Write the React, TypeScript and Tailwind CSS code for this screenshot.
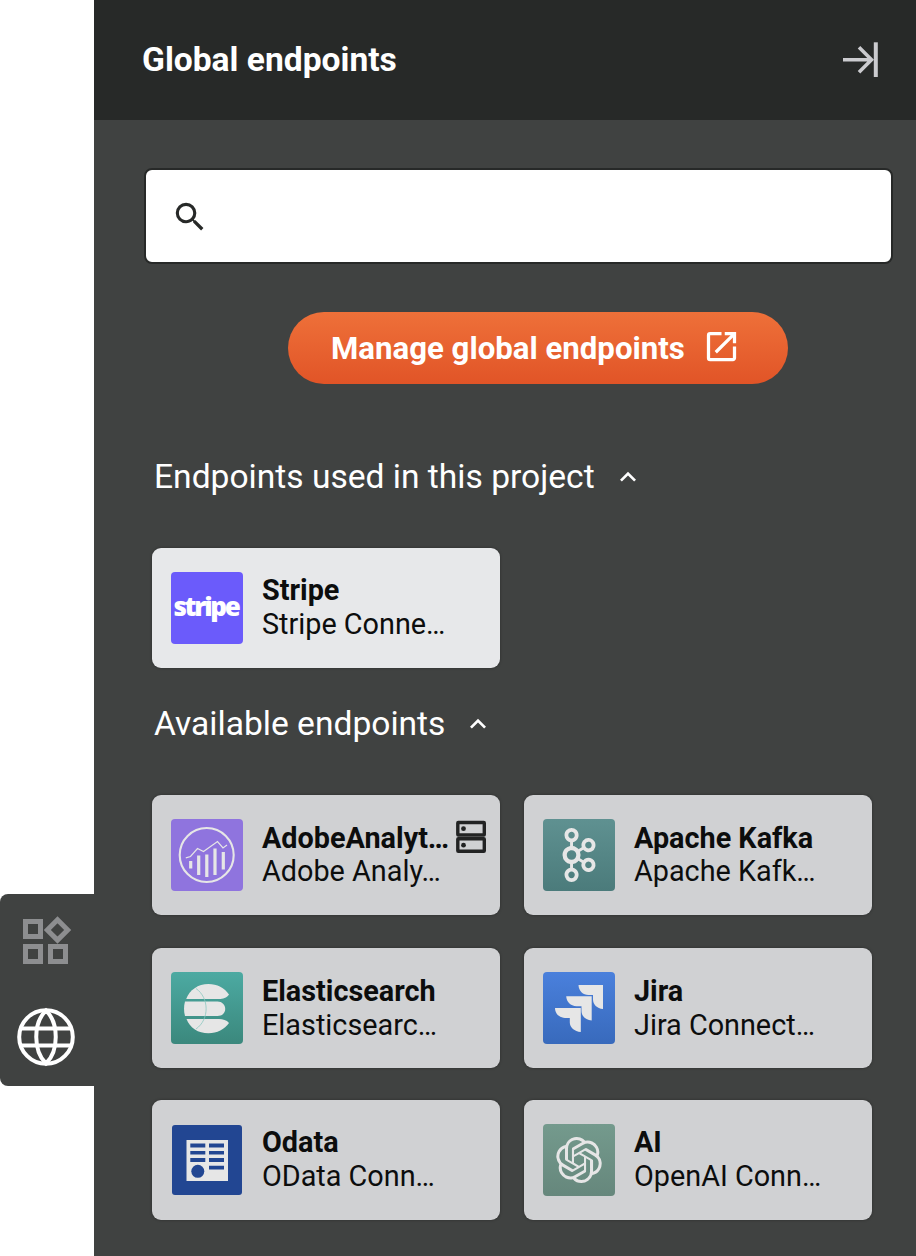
import React from "react";
import { MdKeyboardArrowUp, MdOpenInNew, MdSearch } from "react-icons/md";
import { SiApachekafka, SiOpenai } from "react-icons/si";

interface EndpointCardProps {
    name: string;
    description: string;
    logo: React.ReactNode;
    used?: boolean;
    onServer?: boolean;
    textClassName?: string;
}

const StripeLogo = () => (
    <div className="flex h-[72px] w-[72px] items-center justify-center rounded bg-[#6b5bfb] pr-[2px] pb-[4px]">
        <span className="font-['Open_Sans',sans-serif] text-[26px] leading-none font-extrabold tracking-[-2.3px] text-white">
            stripe
        </span>
    </div>
);

const AdobeLogo = () => (
    <div className="h-[72px] w-[72px] rounded bg-[#8f74de]">
        <svg viewBox="0 0 72 72" fill="none" stroke="#e6e6e6">
            <circle cx="35.7" cy="36" r="27" strokeWidth="2.1" />
            <path d="M14.8 38.8L19.5 37.5L26.5 29.5L32.5 32.5L46.5 22.5L52 29L56 26" strokeWidth="1.2" />
            <path d="M19.7 42V49.5M27.7 36.5V56M35.8 35.5V58M44 29.5V56M52.3 33V50.5" strokeWidth="3.2" />
        </svg>
    </div>
);

const KafkaLogo = () => (
    <div className="flex h-[72px] w-[72px] items-center justify-center rounded bg-gradient-to-b from-[#5f9191] to-[#4b7b7b]">
        <SiApachekafka className="h-[54px] w-[54px] text-[#e6e6e6]" />
    </div>
);

const ElasticLogo = () => (
    <div className="h-[72px] w-[72px] rounded bg-gradient-to-b from-[#4caaa2] to-[#3b887d]">
        <svg viewBox="0 0 72 72" fill="#e6e6e6">
            <path d="M15.2 27C18.5 18 27 12 37.5 12C46 12 53.5 16 58 22.5C55.5 26 52 27 48 27Z" />
            <path d="M14 29.5H46.5C51 29.5 54.2 32.8 54.2 37C54.2 41.2 51 44 46.5 44H14C12.7 39.5 12.7 34 14 29.5Z" />
            <path d="M15.5 47H48C52 47 55.5 48 58 51C53.5 57.5 46 61.3 37.5 61.3C27 61.3 19 56 15.5 47Z" />
            <path d="M25 16.5C38.5 26 38.5 47.5 25 57" fill="none" stroke="#8cc8c0" strokeWidth="0.8" />
        </svg>
    </div>
);

const JiraLogo = () => (
    <div className="h-[72px] w-[72px] rounded bg-gradient-to-b from-[#4a80dc] to-[#386abc]">
        <svg viewBox="0 0 72 72" fill="#e6e6e6">
            <path d="M35.5 13H60V37C54 36.5 50 32.5 50 27.5V23H45.5C40 23 35.7 19 35.5 13Z" />
            <path d="M23.2 24.3H48.7V48.6C42.5 48 38.5 44 38.5 39V34.2H33.5C27.5 34 23.5 30 23.2 24.3Z" />
            <path d="M12 36H37.8V60C31.5 59.5 26.8 55.5 26.8 50.5V46H22C16 45.5 12 41.5 12 36Z" />
        </svg>
    </div>
);

const OdataLogo = () => (
    <div className="flex h-[72px] w-[72px] items-center justify-center">
        <svg width="70" height="70" viewBox="0 0 70 70">
            <rect width="70" height="70" rx="3" fill="#224692" />
            <rect x="14.5" y="15" width="41.5" height="41" fill="#e6e6e6" />
            <path
                d="M18.3 18.5h15v4h-15zM37 18.5h15v4H37zM18.3 26h15v3.5h-15zM37 26h15v3.5H37zM18.3 33h15v4h-15zM37 33h15v4H37zM37 40.7h15v3.8H37z"
                fill="#224692"
            />
            <circle cx="25.8" cy="46.3" r="6.5" fill="#224692" />
        </svg>
    </div>
);

const OpenAiLogo = () => (
    <div className="flex h-[72px] w-[72px] items-center justify-center rounded bg-gradient-to-b from-[#749a8d] to-[#66877c]">
        <SiOpenai className="h-[46px] w-[46px] text-[#e6e6e6]" />
    </div>
);

const ServerIcon = () => (
    <svg className="absolute top-[24.2px] right-[13.5px]" width="32" height="34" viewBox="0 0 32 34" fill="none">
        <rect x="2.8" y="2.5" width="26.5" height="12.5" rx="0.5" stroke="#222323" strokeWidth="3.4" />
        <rect x="2.8" y="18.8" width="26.5" height="12.5" rx="0.5" stroke="#222323" strokeWidth="3.4" />
        <circle cx="8.5" cy="8.7" r="2.4" fill="#222323" />
        <circle cx="8.5" cy="25.2" r="2.4" fill="#222323" />
    </svg>
);

const EndpointCard: React.FC<EndpointCardProps> = ({ name, description, logo, used, onServer, textClassName = "" }) => {
    return (
        <div
            className={`relative flex h-[120px] w-[348px] items-center gap-[19px] rounded-[9px] pl-[19px] shadow-[0_0_3px_rgba(0,0,0,0.35)] ${
                used ? "bg-[#e7e8ea]" : "bg-[#d0d1d3]"
            }`}
        >
            {logo}
            <div className={`text-[28.8px] leading-[33.6px] whitespace-nowrap text-[#0c0d0d] ${textClassName}`}>
                <h3 className="font-bold">{name}</h3>
                <p>{description}</p>
            </div>
            {onServer && <ServerIcon />}
        </div>
    );
};

const SectionHeading = ({ title }: { title: string }) => (
    <button className="flex h-[48px] items-center gap-[17px] pl-[10px] text-[33.6px] text-white">
        {title}
        <MdKeyboardArrowUp className="h-8 w-8" />
    </button>
);

const Sidebar = () => (
    <div className="w-[94px] shrink-0 bg-white pt-[894px]">
        <div className="flex h-[192px] flex-col items-start rounded-l-lg bg-[#404241]">
            <button className="pt-[20px] pl-[21px]">
                <svg width="52" height="52" viewBox="0 0 52 52" fill="none" stroke="#8d8e90" strokeWidth="5">
                    <rect x="4.5" y="7.5" width="15" height="15" />
                    <rect x="4.5" y="32.5" width="15" height="15" />
                    <rect x="29.5" y="32.5" width="15" height="15" />
                    <path d="M36.5 5.7L46.7 15.9L36.5 26.1L26.3 15.9Z" />
                </svg>
            </button>
            <button className="pt-[41px] pl-[16px]">
                <svg width="60" height="60" viewBox="0 0 60 60" fill="none" stroke="#ffffff" strokeWidth="4">
                    <circle cx="30" cy="30" r="26.8" />
                    <path d="M4.5 21.5H55.5M4.5 38.5H55.5" />
                    <path d="M30 3.5C17 16 17 44 30 56.5C43 44 43 16 30 3.5Z" />
                </svg>
            </button>
        </div>
    </div>
);

const App = () => {
    return (
        <div className="flex h-[1256px] w-[916px] overflow-hidden bg-white font-[Roboto,sans-serif]">
            <Sidebar />
            <div className="flex-1 bg-[#404241]">
                <header className="flex h-[120px] items-center justify-between bg-[#272928] pr-[36px] pl-[48px]">
                    <h1 className="text-[33.6px] font-bold text-white">Global endpoints</h1>
                    <button>
                        <svg width="38" height="36" viewBox="0 0 38 36" fill="none" stroke="#cbcbcf">
                            <path d="M1 17.7H30M17 5.2L29.5 17.7L17 30.2" strokeWidth="3.6" />
                            <path d="M33.8 0.3V35" strokeWidth="4" />
                        </svg>
                    </button>
                </header>
                <main className="pt-12 pl-[50px]">
                    <div className="flex h-24 w-[749px] items-center rounded-lg border-2 border-[#272928] bg-white pt-[2px] pl-[25px]">
                        <MdSearch className="h-[38px] w-[38px] text-[#272928]" />
                    </div>
                    <button className="mt-12 ml-[144px] flex h-[72px] w-[500px] items-center gap-[17.5px] rounded-full bg-gradient-to-b from-[#ee7039] to-[#e15427] pl-[43px] text-[31.2px] font-bold text-white">
                        <span className="pt-[2px]">Manage global endpoints</span>
                        <MdOpenInNew className="mb-[2.5px] h-[39px] w-[39px]" />
                    </button>
                    <section className="mt-[69px]">
                        <SectionHeading title="Endpoints used in this project" />
                        <div className="mt-[47px] pl-2">
                            <EndpointCard name="Stripe" description="Stripe Conne…" logo={<StripeLogo />} used />
                        </div>
                    </section>
                    <section className="mt-[32px]">
                        <SectionHeading title="Available endpoints" />
                        <div className="mt-[47.4px] grid grid-cols-[348px_348px] gap-x-6 gap-y-[32.2px] pl-2">
                            <EndpointCard name="AdobeAnalyt…" description="Adobe Analy…" logo={<AdobeLogo />} onServer />
                            <EndpointCard name="Apache Kafka" description="Apache Kafk…" logo={<KafkaLogo />} />
                            <EndpointCard
                                name="Elasticsearch"
                                description="Elasticsearc…"
                                logo={<ElasticLogo />}
                                textClassName="pt-[2px]"
                            />
                            <EndpointCard
                                name="Jira"
                                description="Jira Connect…"
                                logo={<JiraLogo />}
                                textClassName="pt-[2px]"
                            />
                            <EndpointCard name="Odata" description="OData Conn…" logo={<OdataLogo />} />
                            <EndpointCard name="AI" description="OpenAI Conn…" logo={<OpenAiLogo />} />
                        </div>
                    </section>
                </main>
            </div>
        </div>
    );
};

export default App;
